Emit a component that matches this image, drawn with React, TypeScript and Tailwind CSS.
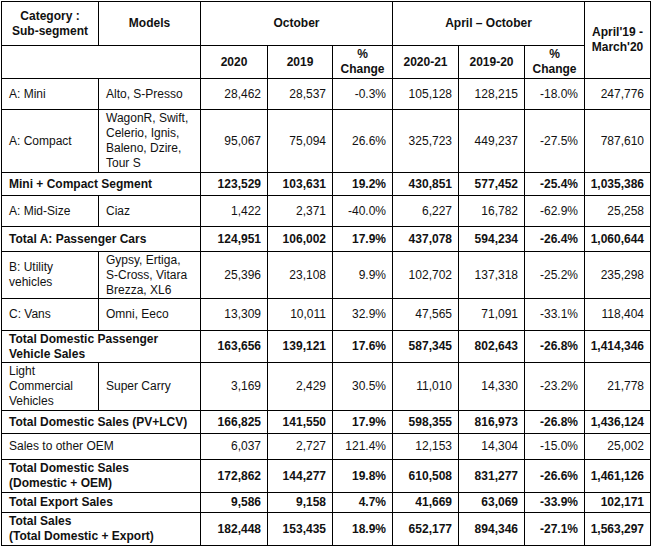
import React from "react";

type Row = {
  cat: React.ReactNode;
  model?: React.ReactNode; // undefined => cat spans both label columns
  bold?: boolean;
  h: string;
  vals: string[];
};

const rows: Row[] = [
  { cat: "A: Mini", model: "Alto, S-Presso", h: "h-[31px]", vals: ["28,462", "28,537", "-0.3%", "105,128", "128,215", "-18.0%", "247,776"] },
  {
    cat: "A: Compact",
    model: (
      <>
        WagonR, Swift,
        <br />
        Celerio, Ignis,
        <br />
        Baleno, Dzire,
        <br />
        Tour S
      </>
    ),
    h: "h-[63px]",
    vals: ["95,067", "75,094", "26.6%", "325,723", "449,237", "-27.5%", "787,610"],
  },
  { cat: "Mini + Compact Segment", bold: true, h: "h-[23px]", vals: ["123,529", "103,631", "19.2%", "430,851", "577,452", "-25.4%", "1,035,386"] },
  { cat: "A: Mid-Size", model: "Ciaz", h: "h-[31px]", vals: ["1,422", "2,371", "-40.0%", "6,227", "16,782", "-62.9%", "25,258"] },
  { cat: "Total A: Passenger Cars", bold: true, h: "h-[25px]", vals: ["124,951", "106,002", "17.9%", "437,078", "594,234", "-26.4%", "1,060,644"] },
  {
    cat: (
      <>
        B: Utility
        <br />
        vehicles
      </>
    ),
    model: (
      <>
        Gypsy, Ertiga,
        <br />
        S-Cross, Vitara
        <br />
        Brezza, XL6
      </>
    ),
    h: "h-[47px]",
    vals: ["25,396", "23,108", "9.9%", "102,702", "137,318", "-25.2%", "235,298"],
  },
  { cat: "C: Vans", model: "Omni, Eeco", h: "h-[32px]", vals: ["13,309", "10,011", "32.9%", "47,565", "71,091", "-33.1%", "118,404"] },
  {
    cat: (
      <>
        Total Domestic Passenger
        <br />
        Vehicle Sales
      </>
    ),
    bold: true,
    h: "h-[32px]",
    vals: ["163,656", "139,121", "17.6%", "587,345", "802,643", "-26.8%", "1,414,346"],
  },
  {
    cat: (
      <>
        Light
        <br />
        Commercial
        <br />
        Vehicles
      </>
    ),
    model: "Super Carry",
    h: "h-[48px]",
    vals: ["3,169", "2,429", "30.5%", "11,010", "14,330", "-23.2%", "21,778"],
  },
  { cat: "Total Domestic Sales (PV+LCV)", bold: true, h: "h-[23px]", vals: ["166,825", "141,550", "17.9%", "598,355", "816,973", "-26.8%", "1,436,124"] },
  { cat: "Sales to other OEM", h: "h-[26px]", vals: ["6,037", "2,727", "121.4%", "12,153", "14,304", "-15.0%", "25,002"] },
  {
    cat: (
      <>
        Total Domestic Sales
        <br />
        (Domestic + OEM)
      </>
    ),
    bold: true,
    h: "h-[33px]",
    vals: ["172,862", "144,277", "19.8%", "610,508", "831,277", "-26.6%", "1,461,126"],
  },
  { cat: "Total Export Sales", bold: true, h: "h-[20px]", vals: ["9,586", "9,158", "4.7%", "41,669", "63,069", "-33.9%", "102,171"] },
  {
    cat: (
      <>
        Total Sales
        <br />
        (Total Domestic + Export)
      </>
    ),
    bold: true,
    h: "h-[33px]",
    vals: ["182,448", "153,435", "18.9%", "652,177", "894,346", "-27.1%", "1,563,297"],
  },
];

const cell = "border border-black px-0 align-middle";
const head = "border border-black text-center align-middle font-bold";

export default function App() {
  return (
    <div className="min-h-[547px] w-[653px] bg-white pl-[1px] pt-[1px] font-['Liberation_Sans',Arial,sans-serif] text-[12px] leading-[15px] text-[#111]">
      <table className="w-[649px] table-fixed border-collapse">
        <colgroup>
          <col className="w-[97px]" />
          <col className="w-[102px]" />
          <col className="w-[67px]" />
          <col className="w-[65px]" />
          <col className="w-[60px]" />
          <col className="w-[66px]" />
          <col className="w-[66px]" />
          <col className="w-[60px]" />
          <col className="w-[66px]" />
        </colgroup>
        <thead>
          <tr className="h-[44px]">
            <th className={head}>
              Category :
              <br />
              Sub-segment
            </th>
            <th className={head}>Models</th>
            <th className={head} colSpan={3}>
              October
            </th>
            <th className={head} colSpan={3}>
              April – October
            </th>
            <th className={head} rowSpan={2}>
              April'19 -
              <br />
              March'20
            </th>
          </tr>
          <tr className="h-[33px]">
            <th className={head} colSpan={2}></th>
            <th className={head}>2020</th>
            <th className={head}>2019</th>
            <th className={head}>
              %
              <br />
              Change
            </th>
            <th className={head}>2020-21</th>
            <th className={head}>2019-20</th>
            <th className={head}>
              %
              <br />
              Change
            </th>
          </tr>
        </thead>
        <tbody>
          {rows.map((r, i) => (
            <tr key={i} className={`${r.h} ${r.bold ? "font-bold" : ""}`}>
              {r.model === undefined ? (
                <td className={`${cell} pl-[7px] text-left`} colSpan={2}>
                  {r.cat}
                </td>
              ) : (
                <>
                  <td className={`${cell} pl-[7px] text-left`}>{r.cat}</td>
                  <td className={`${cell} pl-[7px] text-left`}>{r.model}</td>
                </>
              )}
              {r.vals.map((v, j) => (
                <td key={j} className={`${cell} pr-[6px] text-right`}>
                  {v}
                </td>
              ))}
            </tr>
          ))}
        </tbody>
      </table>
    </div>
  );
}
